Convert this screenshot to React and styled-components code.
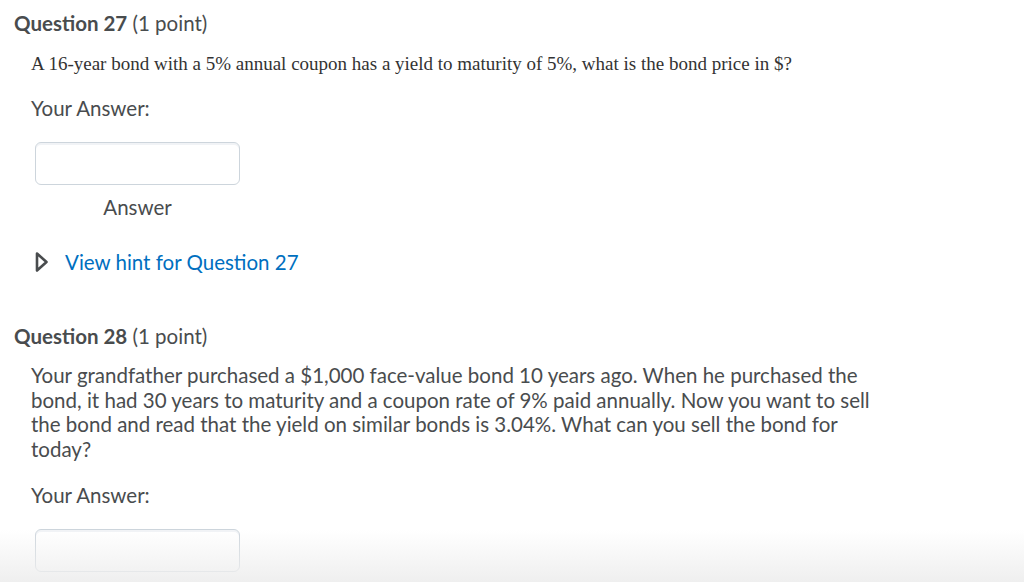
import React from "react";
import styled, { createGlobalStyle } from "styled-components";

const Global = createGlobalStyle`
  html, body { margin: 0; padding: 0; background: #fff; }
  body { font-family: Lato, "Noto Sans", sans-serif; color: #494c4e; }
`;

const Page = styled.div`
  position: relative;
  width: 1024px;
  height: 582px;
  overflow: hidden;
  padding: 10px 0 0 14px;
  box-sizing: border-box;
`;

const Question = styled.section`
  display: flex;
  flex-direction: column;
  margin-bottom: ${p => p.gap || 0}px;
`;

const Title = styled.h2`
  margin: 0;
  font-size: 20.5px;
  font-weight: 400;
  line-height: 26px;
  color: #494c4e;
  b { font-weight: 700; }
`;

const Body = styled.div`
  padding-left: 17px;
  display: flex;
  flex-direction: column;
`;

const SerifText = styled.p`
  margin: 16px 0 0;
  font-family: "Liberation Serif", "Times New Roman", serif;
  font-size: 19px;
  line-height: 24px;
  color: #333;
`;

const Text = styled.p`
  margin: 14px 0 0;
  font-size: 20.5px;
  line-height: 24.5px;
  width: 860px;
`;

const Label = styled.div`
  margin-top: ${p => p.top}px;
  font-size: 20.5px;
  line-height: 24px;
`;

const AnswerBox = styled.div`
  margin: ${p => p.top}px 0 0 4px;
  width: 203px;
  height: 41px;
  border: 1px solid #cdd5dc;
  border-radius: 6px;
  background: #fff;
  box-shadow: inset 0 2px 0 0 rgba(185, 194, 208, 0.2);
`;

const Caption = styled.div`
  width: 205px;
  margin-left: 4px;
  text-align: center;
  margin-top: 10px;
  font-size: 20.5px;
  line-height: 24px;
`;

const Hint = styled.a`
  display: flex;
  align-items: center;
  gap: 17px;
  margin: 31px 0 0 4px;
  color: #006fbf;
  font-size: 20.5px;
  line-height: 24px;
  text-decoration: none;
  cursor: pointer;
`;

const Fade = styled.div`
  position: absolute;
  left: 0;
  right: 0;
  bottom: 0;
  height: 52px;
  background: linear-gradient(to bottom, rgba(240,240,240,0), rgba(238,238,238,0.95));
  pointer-events: none;
`;

const Triangle = () => (
  <svg width="13" height="22" viewBox="0 0 13 22">
    <path d="M2 2.5 L11.5 11 L2 19.5 Z" fill="none" stroke="#494c4e" strokeWidth="2.6" strokeLinejoin="round" />
  </svg>
);

export default function App() {
  return (
    <Page>
      <Global />
      <Question gap={49}>
        <Title><b>Question 27</b> (1 point)</Title>
        <Body>
          <SerifText>A 16-year bond with a 5% annual coupon has a yield to maturity of 5%, what is the bond price in $?</SerifText>
          <Label top={20}>Your Answer:</Label>
          <AnswerBox top={22} />
          <Caption>Answer</Caption>
          <Hint><Triangle />View hint for Question 27</Hint>
        </Body>
      </Question>
      <Question>
        <Title><b>Question 28</b> (1 point)</Title>
        <Body>
          <Text>Your grandfather purchased a $1,000 face-value bond 10 years ago. When he purchased the bond, it had 30 years to maturity and a coupon rate of 9% paid annually. Now you want to sell the bond and read that the yield on similar bonds is 3.04%. What can you sell the bond for today?</Text>
          <Label top={22}>Your Answer:</Label>
          <AnswerBox top={22} />
        </Body>
      </Question>
      <Fade />
    </Page>
  );
}
